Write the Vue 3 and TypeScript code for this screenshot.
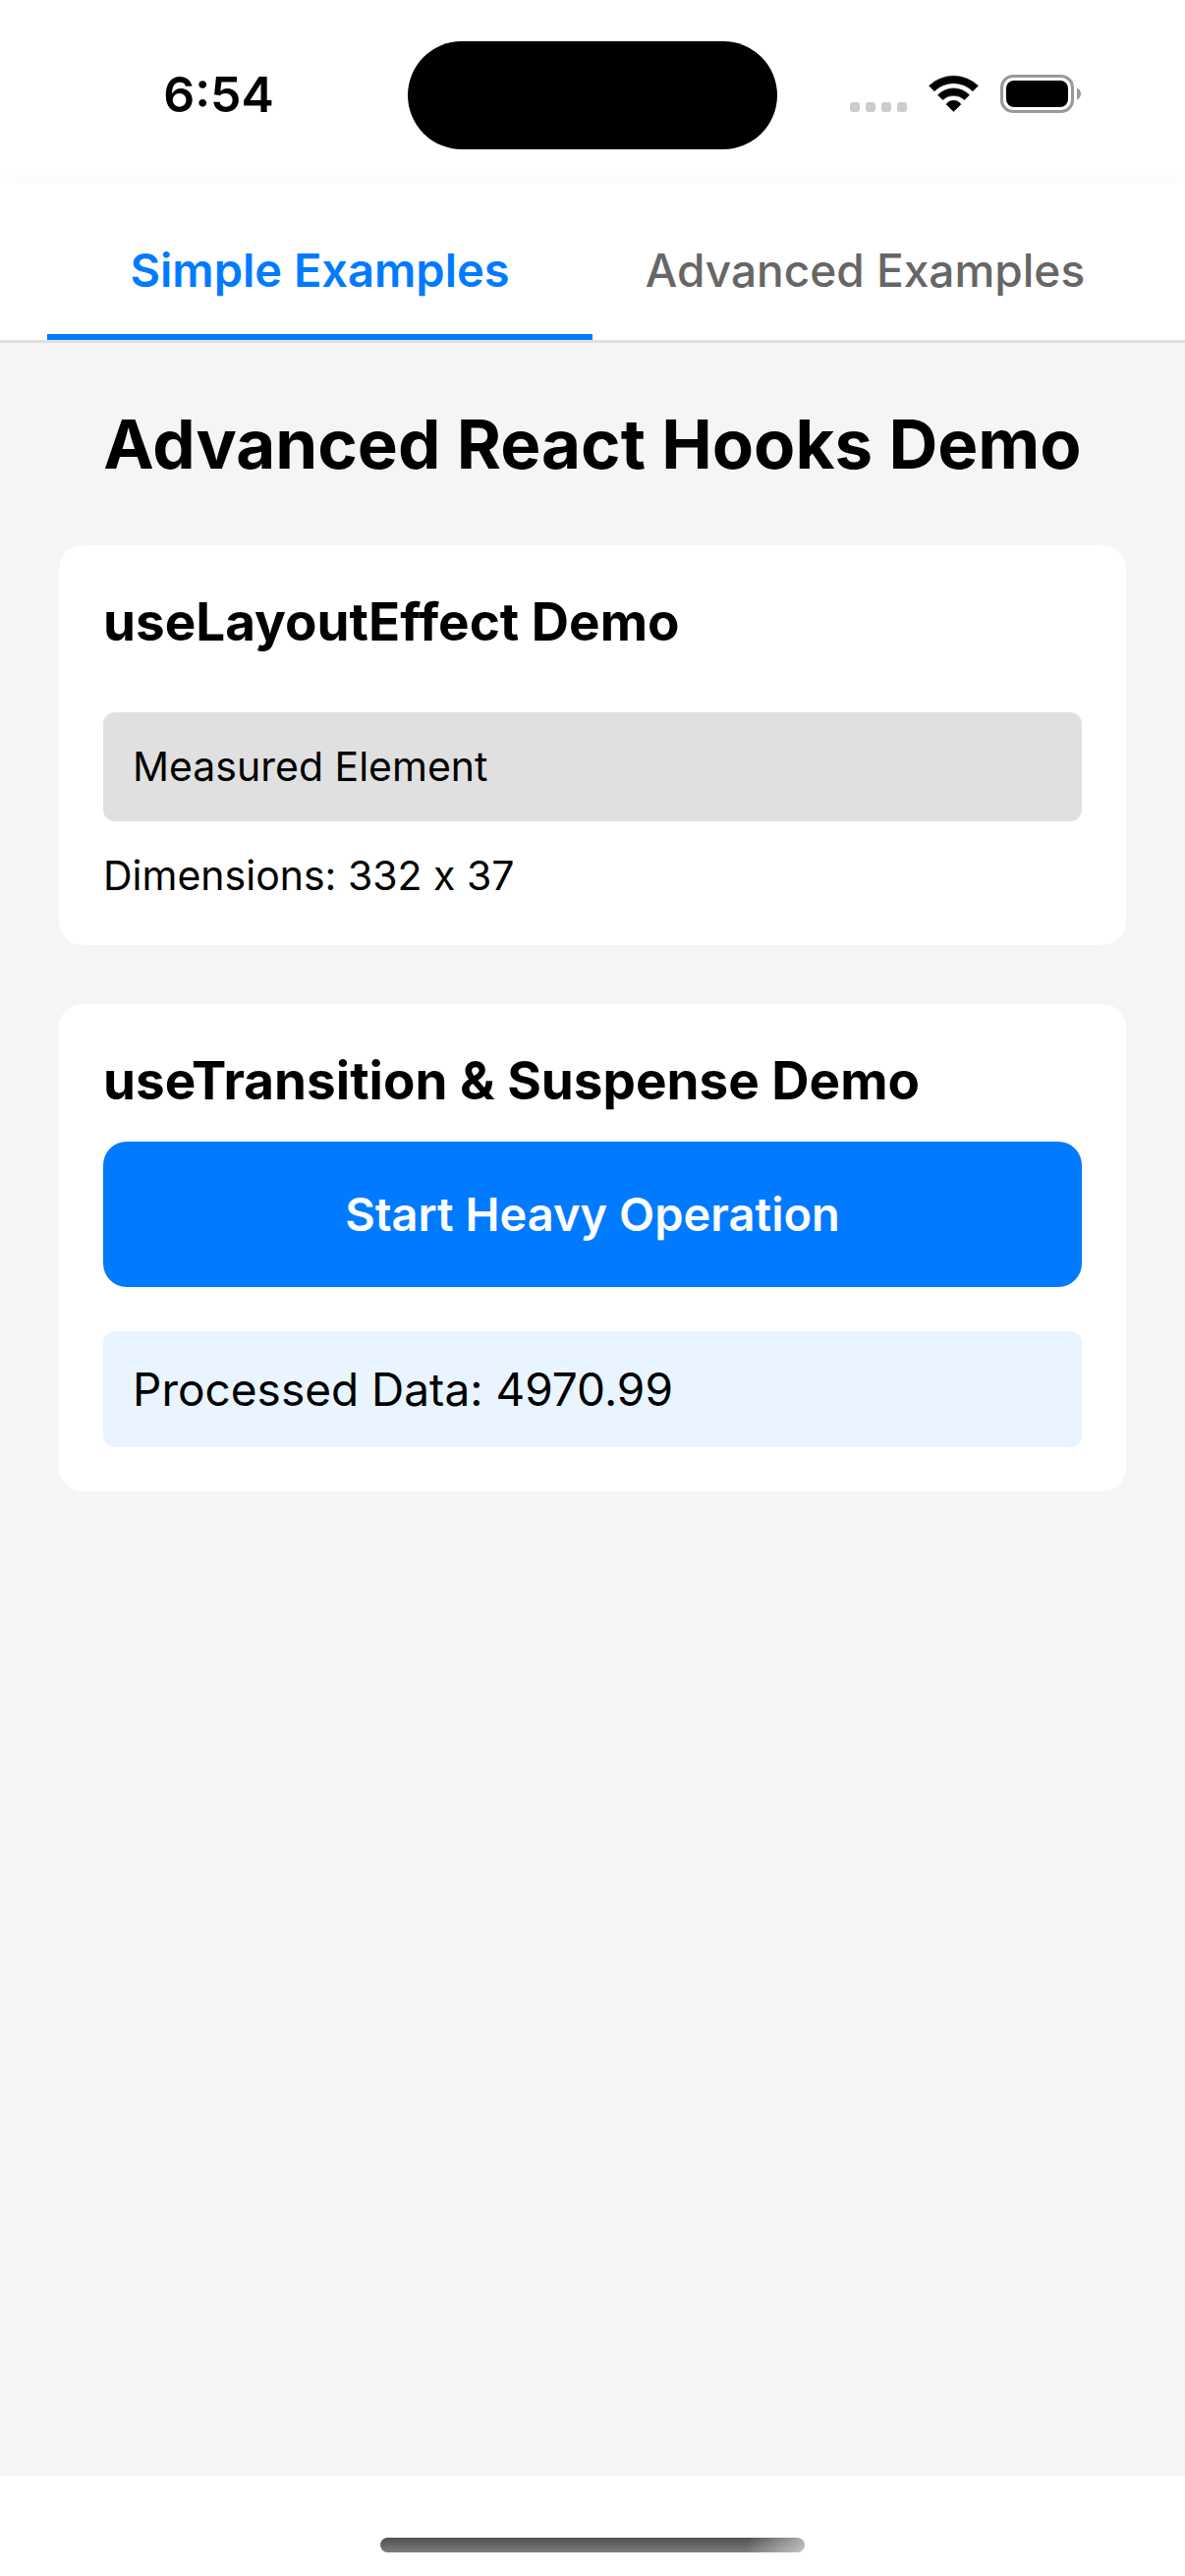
<script setup lang="ts">
import { ref } from 'vue'

type TabId = 'simple' | 'advanced'

const tabs: { id: TabId; label: string }[] = [
  { id: 'simple', label: 'Simple Examples' },
  { id: 'advanced', label: 'Advanced Examples' },
]

const activeTab = ref<TabId>('simple')
const dimensions = ref({ width: 332, height: 37 })
const processed = ref(4970.99)

function startHeavyOperation(): void {
  let total = 0
  for (let i = 0; i < 10000; i++) total += Math.random()
  processed.value = total
}
</script>

<template>
  <div class="screen">
    <header class="status-bar">
      <span class="time">6:54</span>
      <span class="island"></span>
      <div class="status-icons">
        <svg width="58" height="41" viewBox="0 0 58 41" fill="#ccc" aria-hidden="true">
          <rect x="0" y="28" width="10" height="10" rx="3" />
          <rect x="16" y="28" width="10" height="10" rx="3" />
          <rect x="32" y="28" width="10" height="10" rx="3" />
          <rect x="48" y="28" width="10" height="10" rx="3" />
        </svg>
        <svg width="51" height="41" viewBox="0 0 51 41" aria-hidden="true">
          <g fill="#000" stroke="#000" stroke-width="0.6" stroke-linejoin="round">
            <path d="M0.6 11.3A36 36 0 0 1 50.4 11.3L45 16.7A27.7 27.7 0 0 0 6 16.7Z" />
            <path d="M9.5 20.7A22.2 22.2 0 0 1 41.5 20.7L36.6 25.6A16.4 16.4 0 0 0 14.4 25.6Z" />
            <path d="M18.1 30.2A8.9 8.9 0 0 1 32.9 30.2L25.5 37.6Z" />
          </g>
        </svg>
        <svg width="82" height="41" viewBox="0 0 82 41" aria-hidden="true">
          <rect x="1.5" y="1.5" width="72" height="36" rx="11.5" fill="none" stroke="#999" stroke-width="3" />
          <rect x="6" y="6" width="63" height="27" rx="8" fill="#000" />
          <path d="M78 13.5C80.6 14.6 82 16.8 82 19.5S80.6 24.4 78 25.5Z" fill="#999" />
        </svg>
      </div>
    </header>

    <nav class="tabs" role="tablist">
      <button
        v-for="tab in tabs"
        :key="tab.id"
        type="button"
        role="tab"
        class="tab"
        :class="{ active: tab.id === activeTab }"
        :aria-selected="tab.id === activeTab"
        @click="activeTab = tab.id"
      >
        {{ tab.label }}
      </button>
    </nav>

    <main class="content">
      <h1 class="title">Advanced React Hooks Demo</h1>

      <section class="card">
        <h2 class="card-title spaced">useLayoutEffect Demo</h2>
        <div class="measured">Measured Element</div>
        <p class="dimensions">Dimensions: {{ dimensions.width }} x {{ dimensions.height }}</p>
      </section>

      <section class="card">
        <h2 class="card-title">useTransition &amp; Suspense Demo</h2>
        <button type="button" class="action" @click="startHeavyOperation">Start Heavy Operation</button>
        <div class="result">Processed Data: {{ processed.toFixed(2) }}</div>
      </section>
    </main>

    <footer class="home-area">
      <span class="home-indicator"></span>
    </footer>
  </div>
</template>

<style>
body {
  margin: 0;
  background: #fff;
}
</style>

<style scoped>
.screen {
  display: flex;
  flex-direction: column;
  min-height: 100vh;
  background: #fff;
  color: #000;
  font-family: Inter, "Liberation Sans", sans-serif;
}

.status-bar {
  display: grid;
  grid-template-columns: 1fr 376px 1fr;
  align-items: center;
  box-sizing: border-box;
  height: 186px;
  padding-top: 7px;
}

.time {
  padding-left: 30px;
  font-size: 50px;
  font-weight: 600;
  line-height: 57px;
  text-align: center;
}

.island {
  height: 110px;
  border-radius: 55px;
  background: #000;
}

.status-icons {
  display: flex;
  justify-content: center;
  gap: 22px;
  padding-right: 32px;
}

.status-icons svg {
  display: block;
}

.tabs {
  display: flex;
  padding: 0 48px;
  border-bottom: 3px solid #e0e0e0;
  background: #fff;
  box-shadow: 0 6px 24px rgba(0, 0, 0, 0.06);
}

.tab {
  flex: 1;
  padding: 60px 0 36px;
  border: 0;
  border-bottom: 6px solid transparent;
  background: none;
  color: #666;
  font-family: inherit;
  font-size: 46px;
  font-weight: 500;
  line-height: 58px;
  white-space: nowrap;
}

.tab.active {
  border-bottom-color: #007aff;
  color: #007aff;
  font-size: 47px;
  font-weight: 600;
}

.content {
  position: relative;
  display: flex;
  flex: 1;
  flex-direction: column;
  gap: 60px;
  padding: 60px;
  background: #f5f5f5;
}

.title {
  margin: 0;
  font-size: 69px;
  font-weight: 700;
  line-height: 86px;
  text-align: center;
}

.card {
  display: flex;
  flex-direction: column;
  padding: 45px;
  border-radius: 24px;
  background: #fff;
}

.card-title {
  margin: 0 0 28px;
  font-size: 53px;
  font-weight: 700;
  line-height: 67px;
  font-variant-ligatures: none;
}

.card-title.spaced {
  margin-bottom: 58px;
}

.measured {
  padding: 30px;
  border-radius: 12px;
  background: #e0e0e0;
  font-size: 41px;
  line-height: 51px;
}

/* Inter would otherwise turn "332 x 37" into a multiplication sign. */
.dimensions {
  margin: 30px 0 0;
  font-size: 41px;
  line-height: 51px;
  font-variant-ligatures: none;
}

.action {
  padding: 45px;
  border: 0;
  border-radius: 24px;
  background: #007aff;
  color: #fff;
  font-family: inherit;
  font-size: 47px;
  font-weight: 600;
  line-height: 58px;
}

.result {
  margin-top: 45px;
  padding: 30px;
  border-radius: 12px;
  background: #e8f4ff;
  font-size: 46px;
  line-height: 58px;
}

.home-area {
  display: flex;
  justify-content: center;
  padding: 63px 0 24px;
}

.home-indicator {
  width: 432px;
  height: 15px;
  border-radius: 8px;
  background:
    linear-gradient(100deg, transparent 86%, rgba(255, 255, 255, 0.55) 100%),
    linear-gradient(#505050, #7c7c7c);
}
</style>
